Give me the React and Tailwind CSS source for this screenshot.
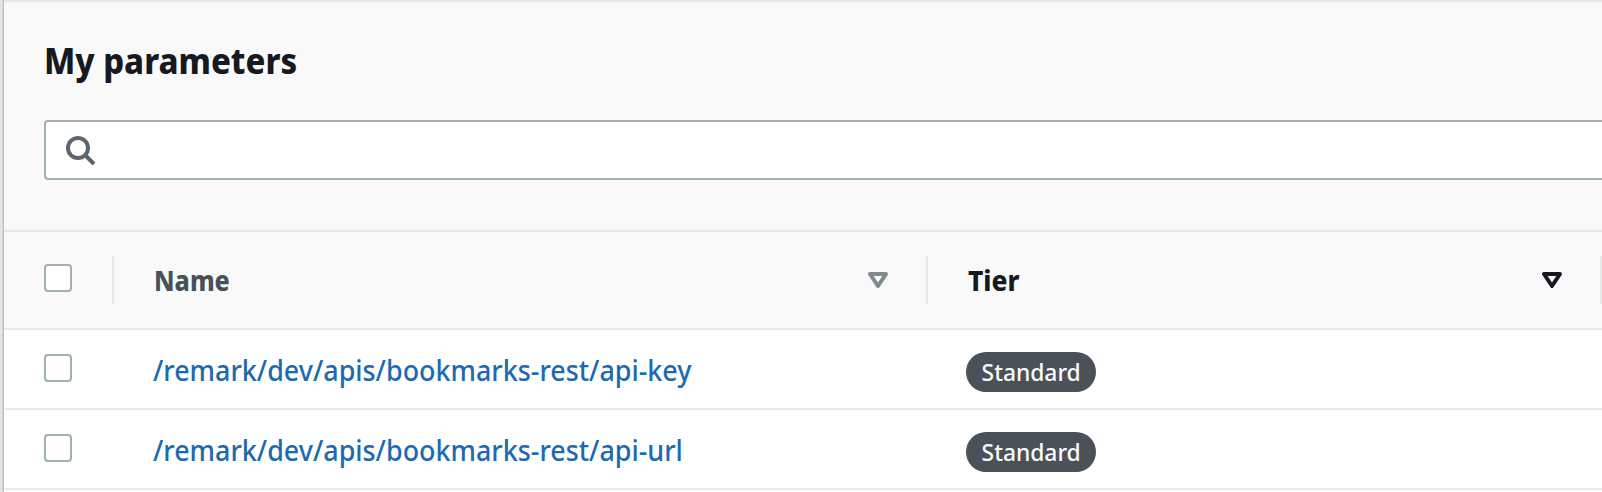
const rows = ['/remark/dev/apis/bookmarks-rest/api-key', '/remark/dev/apis/bookmarks-rest/api-url'];

function Checkbox() {
  return <span role="checkbox" aria-checked="false" className="block size-7 rounded-[4px] border-2 border-[#a2b1b1] bg-white" />;
}

function SortIcon({ className }) {
  return (
    <svg viewBox="0 0 20 16" className={`h-4 w-5 ${className}`} fill="none" stroke="currentColor" strokeWidth="4" strokeLinejoin="round">
      <path d="M2 2h16l-8 12z" />
    </svg>
  );
}

function SearchIcon() {
  return (
    <svg viewBox="0 0 32 32" className="size-8 text-[#5c666e]" fill="none" stroke="currentColor" strokeWidth="4">
      <circle cx="14" cy="14" r="10" />
      <path d="M21 21l9 9" />
    </svg>
  );
}

export default function App() {
  return (
    <div className="flex h-[492px] w-[1602px] overflow-hidden bg-white font-['Noto_Sans',sans-serif] text-[28px] leading-9">
      <div className="w-1 shrink-0 border-r border-[#b3b7b7] bg-linear-to-r from-[#e7e9e9] to-[#d8dbdb]" />
      <main className="flex min-w-0 grow flex-col">
        <header className="h-[230px] shrink-0 border-t-2 border-[#e4e9e9] bg-[#f9f9f9] pl-10">
          <h1 className="mt-[35px] h-[49px] text-[36px] leading-[48px] font-extrabold whitespace-nowrap text-[#16191f]"><span className="inline-block origin-left scale-x-[0.912]">My parameters</span></h1>
          <div className="mt-[34px] flex h-[60px] items-center rounded-l-[4px] border-2 border-r-0 border-[#a2b1b1] bg-white pl-[18px]">
            <SearchIcon />
          </div>
        </header>
        <div className="flex h-[100px] shrink-0 items-center border-y-2 border-[#e4e9e9] bg-[#f9f9f9] font-extrabold">
          <div className="flex h-12 w-[110px] items-start border-r-2 border-[#e4e9e9] pt-2 pl-10"><Checkbox /></div>
          <div className="flex h-12 w-[814px] items-center justify-between border-r-2 border-[#e4e9e9] pr-[38px] pl-10 text-[#485058]">
            <span className="inline-block origin-left scale-x-[0.895]">Name</span>
            <SortIcon className="text-[#7f8c8d]" />
          </div>
          <div className="flex h-12 grow items-center justify-between border-r-2 border-[#e4e9e9] pr-[38px] pl-10 text-[#16191f]">
            <span className="inline-block origin-left scale-x-[0.94]">Tier</span>
            <SortIcon className="text-[#16191f]" />
          </div>
        </div>
        {rows.map((name) => (
          <div key={name} className="ml-px flex h-20 shrink-0 border-b-2 border-[#e6eaea]">
            <div className="w-[109px] pt-6 pl-[39px]"><Checkbox /></div>
            <div className="w-[814px] pt-[22px] pl-[39px]"><a className="inline-block origin-left scale-x-[0.96] font-medium whitespace-nowrap text-[#1d69b2]">{name}</a></div>
            <div className="pt-[22px] pl-[38px]">
              <span className="flex h-10 w-[130px] items-center justify-center rounded-full bg-[#4a5159] text-[24px] font-medium text-[#fafafa]"><span className="inline-block scale-x-95">Standard</span></span>
            </div>
          </div>
        ))}
      </main>
    </div>
  );
}
